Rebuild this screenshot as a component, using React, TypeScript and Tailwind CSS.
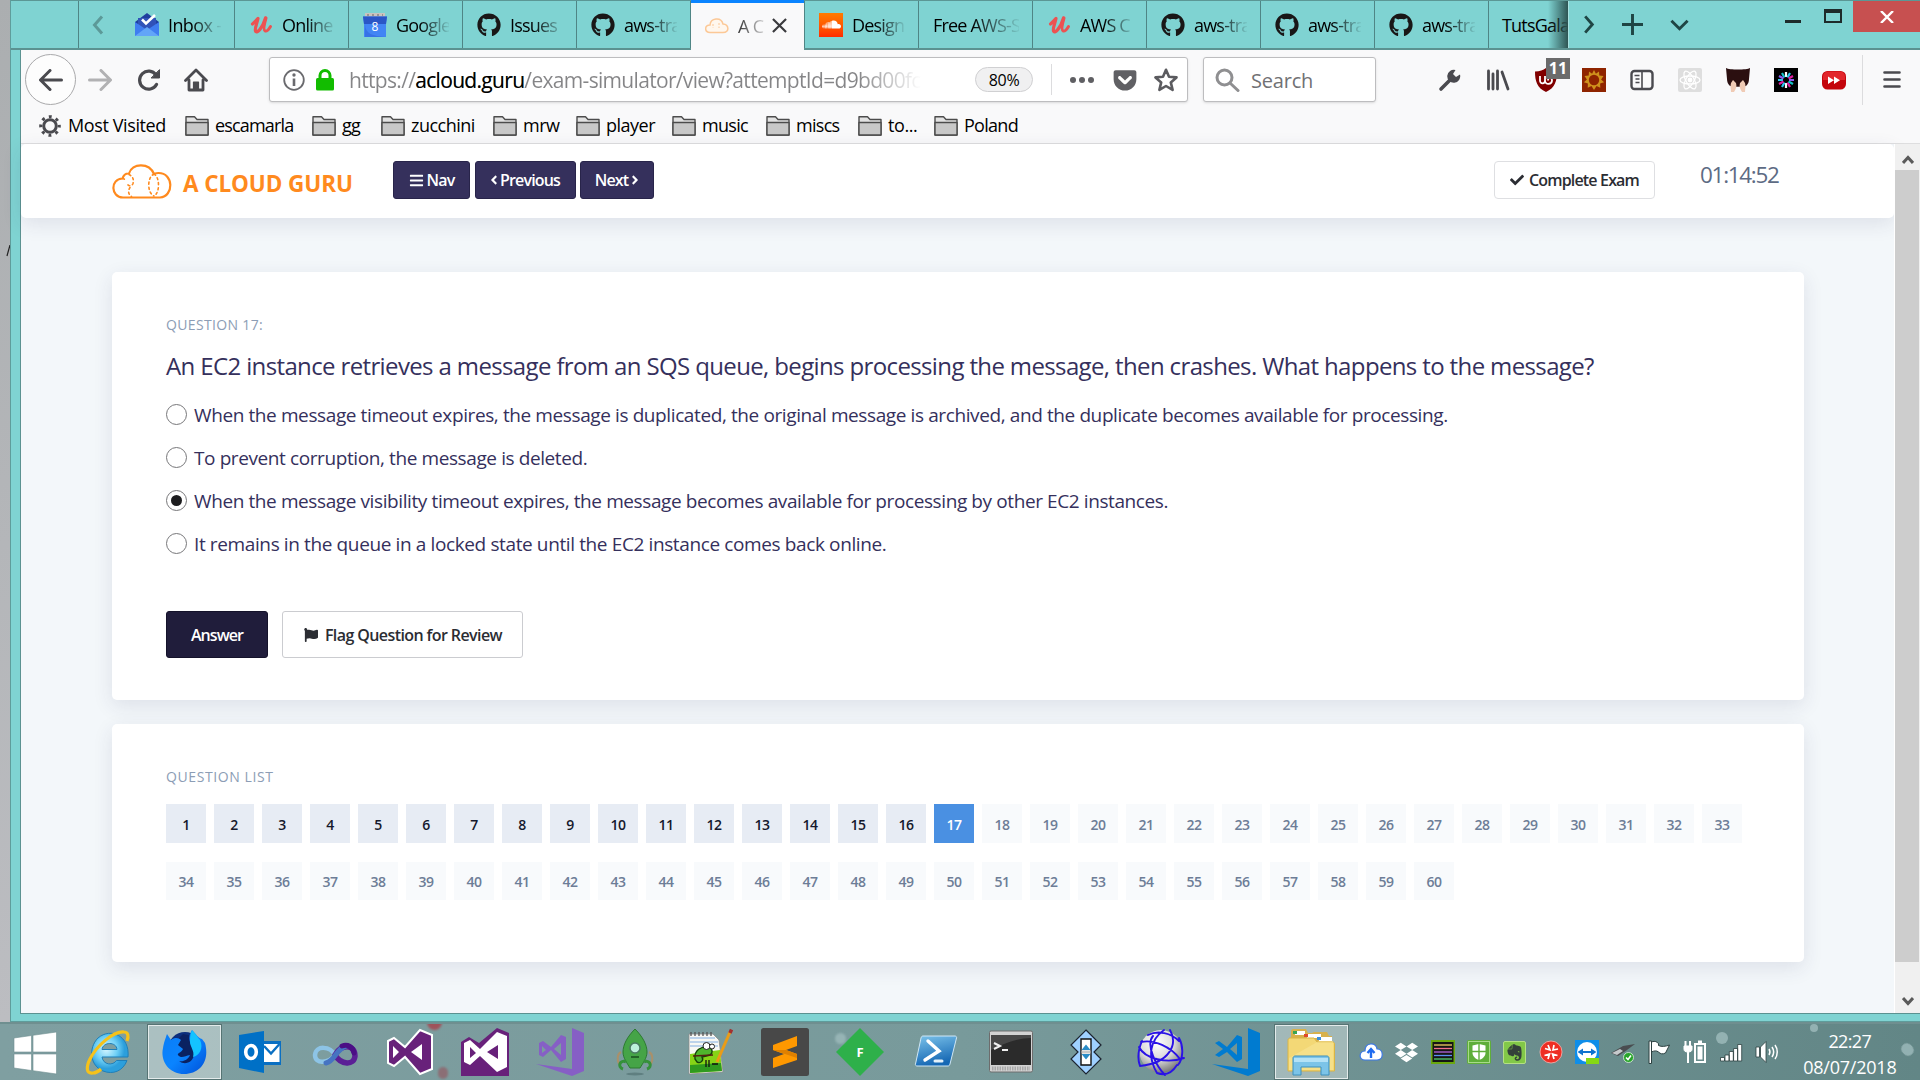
import type { ReactNode } from 'react';
import { FaGithub, FaSoundcloud, FaFlag, FaCheck, FaBars, FaAngleLeft, FaAngleRight, FaDropbox, FaEvernote, FaGetPocket } from 'react-icons/fa';

/* ---------- tab strip ---------- */

const InboxIcon = () => (
  <svg viewBox="0 0 24 24" className="h-6 w-6 shrink-0">
    <path d="M0 9 12 0l12 9v3H0z" fill="#1f3f9e" />
    <path d="M3 5h18v12H3z" fill="#3052b8" />
    <path d="M0 9l12 8 12-8v14H0z" fill="#3f7df0" />
    <path d="M0 23l12-9 12 9z" fill="#62a5f8" />
    <path d="M7 6.500l4 4 9-8.500" fill="none" stroke="#fff" strokeWidth="2.600" />
  </svg>
);

const UdemyIcon = () => (
  <svg viewBox="0 0 24 24" className="h-6 w-6 shrink-0" fill="none" stroke="#ec5252" strokeLinecap="round" strokeLinejoin="round">
    <path d="M3.500 11c2-1.500 4-4 5.500-5.500-1 5-3.500 10-2.500 12.500 1.500 3 7-3 10-13" strokeWidth="3.200" />
    <path d="M17 5c-2 7-3 12-.800 13 1.800.700 3.800-2 5.300-4.500" strokeWidth="3" />
  </svg>
);

const CalendarIcon = () => (
  <svg viewBox="0 0 24 24" className="h-6 w-6 shrink-0">
    <path d="M2 0h20v4H2z" fill="#c9c4c0" />
    <path d="M4 1h2v2H4zM9 1h2v2H9zM14 1h2v2h-2zM19 1h1v2h-1z" fill="#9a9490" />
    <path d="M0 3.500h24L23 11v13H1V11z" fill="#4285f4" />
    <path d="M0 3.500h24L23 11H1z" fill="#2a56c6" />
    <path d="M2 11c0 10 8 12 20 13H2z" fill="#2f66dd" opacity=".6" />
    <text x="12" y="18" fontSize="12" textAnchor="middle" fill="#fff" fontFamily="Open Sans, sans-serif">8</text>
  </svg>
);

const GitHubIcon = () => <FaGithub className="h-6 w-6 shrink-0 text-[#191717]" />;

const CloudTabIcon = () => (
  <svg viewBox="0 0 24 24" className="h-6 w-6 shrink-0" fill="#fff7ee" stroke="#fcc896" strokeWidth="1.500">
    <path d="M5 18.500C-1 18-.500 11 5 11c.500-7 11-8.500 13-1 6 .300 7 8.500 0 8.500z" />
    <path d="M8 10v4M14 9v5" strokeDasharray="2 1.500" strokeWidth="1" />
  </svg>
);

const SoundIcon = () => (
  <span className="flex h-6 w-6 shrink-0 items-center justify-center bg-linear-to-b from-[#ff7a00] to-[#ff2a00]">
    <FaSoundcloud className="h-[19px] w-[19px] text-white" />
  </span>
);

const TABS: { icon?: ReactNode; label: string }[] = [
  { icon: <UdemyIcon />, label: 'Online' },
  { icon: <CalendarIcon />, label: 'Google' },
  { icon: <GitHubIcon />, label: 'Issues' },
  { icon: <GitHubIcon />, label: 'aws-tra' },
];
const TABS_AFTER: { icon?: ReactNode; label: string }[] = [
  { icon: <SoundIcon />, label: 'Design' },
  { label: 'Free AWS-S' },
  { icon: <UdemyIcon />, label: 'AWS C' },
  { icon: <GitHubIcon />, label: 'aws-tra' },
  { icon: <GitHubIcon />, label: 'aws-tra' },
  { icon: <GitHubIcon />, label: 'aws-tra' },
];

const FADE = 'bg-linear-to-r from-black from-45% to-black/5 bg-clip-text text-transparent';

const Tab = ({ icon, label }: { icon?: ReactNode; label: string }) => (
  <div className="flex w-[114px] shrink-0 items-center gap-[9px] border-r border-[#4f8585] pr-[13px] pl-[14px]">
    {icon}
    <span className={`mt-0.5 min-w-0 flex-1 overflow-hidden text-[18px] tracking-[-0.8px] whitespace-nowrap ${FADE}`}>{label}</span>
  </div>
);

const TabStrip = () => (
  <div className="flex h-[50px] border-t border-b-2 border-t-[#5b9795] border-b-[#5b9291] bg-[#7fd3d2]">
    <div className="w-[68px] shrink-0 border-r border-[#4f8585]" />
    <div className="flex w-[42px] shrink-0 items-center justify-center">
      <svg viewBox="0 0 12 20" className="mr-1 h-5 w-3" fill="none" stroke="#5c9998" strokeWidth="3"><path d="M10 1.500 2.500 10l7.500 8.500" /></svg>
    </div>
    <div className="flex w-[114px] shrink-0 items-center gap-[9px] border-r border-[#4f8585] pr-[13px] pl-[14px]">
      <InboxIcon />
      <span className={`mt-0.5 min-w-0 flex-1 overflow-hidden text-[18px] tracking-[-0.6px] whitespace-nowrap ${FADE}`}>Inbox -</span>
    </div>
    {TABS.map((t, i) => <Tab key={i} {...t} />)}
    <div className="-mt-px -mb-0.5 flex w-[113px] shrink-0 items-center border-t-[3px] border-[#0a84ff] bg-[#f9f9fa] pb-0.5 pl-[14px]">
      <CloudTabIcon />
      <span className="mt-0.5 ml-[9px] w-[28px] shrink-0 overflow-hidden bg-linear-to-r from-[#333] to-black/10 bg-clip-text text-[18px] tracking-[-0.6px] whitespace-nowrap text-transparent">A C</span>
      <svg viewBox="0 0 16 16" className="ml-1.5 h-[15px] w-[15px] shrink-0" stroke="#3a3a3d" strokeWidth="2.300"><path d="M1 1l14 14M15 1 1 15" /></svg>
    </div>
    <div className="flex border-l border-[#4f8585]">
      {TABS_AFTER.map((t, i) => <Tab key={i} {...t} />)}
    </div>
    <div className="relative flex w-[79px] shrink-0 items-center overflow-hidden pt-0.5 pl-[13px] text-[18px] tracking-[-0.8px] whitespace-nowrap text-black">
      TutsGala
      <div className="absolute inset-y-0 right-0 w-5 bg-linear-to-r from-transparent to-[#2e5554]" />
    </div>
    <div className="flex flex-1 items-center gap-[27px] border-l border-[#a9e2e1] pl-[14px] text-[#1f4544]">
      <svg viewBox="0 0 12 20" className="h-[19px] w-3" fill="none" stroke="currentColor" strokeWidth="3"><path d="M2 1.500 9.500 10 2 18.500" /></svg>
      <svg viewBox="0 0 20 20" className="h-[21px] w-[21px]" fill="none" stroke="currentColor" strokeWidth="2.800"><path d="M10 0v20M0 10h20" /></svg>
      <svg viewBox="0 0 20 12" className="h-3 w-[19px]" fill="none" stroke="currentColor" strokeWidth="3"><path d="M1.500 1.500 10 10l8.500-8.500" /></svg>
    </div>
    <div className="flex shrink-0 items-start text-[#1e2b2b]">
      <div className="mt-[19px] mr-[23px] h-[3px] w-4 bg-current" />
      <div className="mt-2 mr-[11px] h-[14px] w-[18px] border-[2.500px] border-t-4 border-current" />
      <div className="flex h-[31px] w-[67px] items-center justify-center bg-[#c75050]">
        <svg viewBox="0 0 14 12" className="h-3 w-[14px]" stroke="#fff" strokeWidth="2.400"><path d="M1 0l12 12M13 0 1 12" /></svg>
      </div>
    </div>
  </div>
);

/* ---------- browser toolbar ---------- */

const Slot = ({ children }: { children: ReactNode }) => <div className="flex h-6 w-12 shrink-0 items-center justify-center">{children}</div>;

const Toolbar = () => (
  <div className="flex h-[58px] items-center pt-px text-[#4a4a4f]">
    <div className="ml-[4px] flex h-[51px] w-[51px] shrink-0 items-center justify-center rounded-full border border-[#a9a9ab] bg-[#fdfdfd]">
      <svg viewBox="0 0 24 22" className="h-[22px] w-6" fill="none" stroke="currentColor" strokeWidth="3" strokeLinecap="round" strokeLinejoin="round"><path d="M22.500 11H2M11 1.500 1.500 11l9.500 9.500" /></svg>
    </div>
    <svg viewBox="0 0 24 22" className="ml-[12px] h-[22px] w-6 shrink-0" fill="none" stroke="#b1b1b3" strokeWidth="3" strokeLinecap="round" strokeLinejoin="round"><path d="M1.500 11H22M13 1.500l9.500 9.500-9.500 9.500" /></svg>
    <svg viewBox="0 0 24 22" className="ml-[25px] h-[22px] w-6 shrink-0" fill="none" stroke="currentColor" strokeWidth="3.200" strokeLinecap="round"><path d="M19.500 15.500a9 9 0 1 1-.500-9.500" /><path d="M22.500 1v8h-8z" fill="currentColor" strokeWidth="1" /></svg>
    <svg viewBox="0 0 24 24" className="ml-[23px] h-6 w-6 shrink-0" fill="none" stroke="currentColor" strokeWidth="2.800" strokeLinejoin="round" strokeLinecap="round"><path d="M1.500 12.500 12 2l10.500 10.500M5 12v10h14V12" /><path d="M9.500 22v-8h5v8z" fill="currentColor" strokeWidth="1.200" /></svg>

    <div className="ml-[61px] flex h-[45px] w-[919px] shrink-0 items-center rounded-[3px] border border-[#bdbdbf] bg-white pl-[13px] shadow-sm">
      <svg viewBox="0 0 22 22" className="h-[22px] w-[22px]" fill="none" stroke="#6a6a6e" strokeWidth="1.800"><circle cx="11" cy="11" r="9.800" /><path d="M11 9.500V17" strokeWidth="2.600" /><circle cx="11" cy="6" r=".8" /></svg>
      <svg viewBox="0 0 20 22" className="ml-[10px] h-[22px] w-5"><path d="M5 10V6.500a5 5 0 0 1 10 0V10" fill="none" stroke="#12bc00" strokeWidth="3" /><rect x="1" y="9" width="18" height="12.500" rx="1.500" fill="#12bc00" /></svg>
      <div className="mt-0.5 ml-[14px] w-[578px] overflow-hidden bg-linear-to-r from-[#858587] from-88% to-[#85858700] to-99% bg-clip-text text-[21px] tracking-[-0.68px] whitespace-nowrap text-transparent">https://<span className="text-black">acloud.guru</span>/exam-simulator/view?attemptId=d9bd00fc</div>
      <div className="ml-[48px] flex h-[25px] w-[58px] items-center justify-center rounded-full border border-[#d0d0d2] bg-[#f0f0f1] text-[16px] tracking-[-0.3px] text-black">80%</div>
      <div className="ml-[18px] h-[31px] w-px bg-[#dcdcde]" />
      <svg viewBox="0 0 24 6" className="ml-[18px] h-1.5 w-6" fill="#5f5f63"><circle cx="3" cy="3" r="3" /><circle cx="12" cy="3" r="3" /><circle cx="21" cy="3" r="3" /></svg>
      <FaGetPocket className="ml-[18px] h-[26px] w-[26px] text-[#606064]" />
      <svg viewBox="0 0 24 24" className="ml-[16px] h-6 w-6" fill="none" stroke="#5b5b5f" strokeWidth="2.600" strokeLinejoin="round"><path d="M12 1.800 15 8.800l7.500.600-5.700 5 1.800 7.500L12 18l-6.600 3.900 1.800-7.500-5.700-5L9 8.800z" /></svg>
    </div>

    <div className="ml-[15px] flex h-[45px] w-[173px] shrink-0 items-center rounded-[3px] border border-[#bdbdbf] bg-white pl-[11px] text-[20px] tracking-[-0.2px] text-[#717174] shadow-sm">
      <svg viewBox="0 0 25 24" className="mr-[11px] h-6 w-[25px]" fill="none" stroke="#8f8f91" strokeWidth="3" strokeLinecap="round"><circle cx="9.500" cy="9.500" r="7.500" /><path d="m15 15 8 7.500" /></svg>
      <span className="mt-0.5">Search</span>
    </div>

    <div className="ml-[50px] flex">
      <Slot><svg viewBox="0 0 24 24" className="h-6 w-6"><path d="M3 21 14 10" stroke="currentColor" strokeWidth="3.600" strokeLinecap="round" /><path d="M22 6.500 18 9l-3-3 2.500-4A6.500 6.500 0 1 0 22 6.500z" fill="currentColor" /></svg></Slot>
      <Slot><svg viewBox="0 0 24 24" className="h-6 w-6" fill="none" stroke="currentColor" strokeWidth="2.800" strokeLinecap="round"><path d="M2.500 3v18M7 6v15M11.500 3v18M16 4l6 17" /></svg></Slot>
      <Slot>
        <div className="relative">
          <svg viewBox="0 0 24 24" className="h-6 w-6"><path d="M12 0c3 2.500 6 3.200 11 3.500C23 13 21 20 12 24 3 20 1 13 1 3.500 6 3.200 9 2.500 12 0z" fill="#800000" /><path d="M6 8v4.500c0 4 5 3.500 5 0V8m0 4.500c0 5 7 4 7 0S14 9 14 12.500" fill="none" stroke="#fff" strokeWidth="1.800" /></svg>
          <div className="absolute -top-[10px] left-[12px] flex h-[21px] w-6 items-center justify-center bg-[#6b6b6b] text-[16px] font-bold text-white">11</div>
        </div>
      </Slot>
      <Slot><svg viewBox="0 0 24 24" className="h-6 w-6"><path d="M0 0h24v24H0z" fill="#8f2400" /><path d="m12 2 1.900 3.800L17 3.500l.300 4 4.200.500-2.400 3.500 3 2.800-4 1.200.200 4.200-3.800-1.600L12 22l-2.500-3.900-3.800 1.600.200-4.200-4-1.200 3-2.800L2.500 8l4.200-.500.300-4 3.100 2.300z" fill="#cf911c" /><circle cx="12" cy="12" r="5.200" fill="#8f2400" /></svg></Slot>
      <Slot><svg viewBox="0 0 24 24" className="h-6 w-6" fill="none" stroke="currentColor" strokeWidth="2.400"><rect x="1.500" y="3" width="21" height="18" rx="3" /><path d="M12 3v18" strokeWidth="1.600" /><path d="M4.500 7.500h5M5.500 11h4M5.500 14.500h4" strokeWidth="1.600" /></svg></Slot>
      <Slot>
        <svg viewBox="0 0 24 24" className="h-6 w-6" fill="none" stroke="#fff" strokeWidth="1.300">
          <rect width="24" height="24" rx="2" fill="#dedede" stroke="none" />
          <ellipse cx="12" cy="12" rx="10" ry="4" /><ellipse cx="12" cy="12" rx="10" ry="4" transform="rotate(60 12 12)" /><ellipse cx="12" cy="12" rx="10" ry="4" transform="rotate(120 12 12)" /><circle cx="12" cy="12" r="1.800" fill="#fff" />
        </svg>
      </Slot>
      <Slot><svg viewBox="0 0 24 24" className="h-6 w-6"><path d="M0 0c3 2 21 2 24 0l-1 11c0 3-1 5-3 7-5 1-11 1-16 0-2-2-3-4-3-7z" fill="#2b0f10" /><path d="M5 24c0-3-1-6 0-9l2-3 3 3c1 3 0 6-2 9zM19 24c0-3 1-6 0-9l-2-3-3 3c-1 3 0 6 2 9z" fill="#f0cbb5" /></svg></Slot>
      <Slot><svg viewBox="0 0 24 24" className="h-6 w-6" strokeWidth="2.200"><path d="M0 0h24v24H0z" fill="#000" /><path d="M12 4v5M12 15v5" stroke="#fff" /><path d="m16 5-2.500 4.500M8 19l2.500-4.500M4 12h5" stroke="#2cc8f0" /><path d="m19 8-4.500 2.500M5 16l4.500-2.500M16 19l-2.500-4.500" stroke="#e01ea0" /><path d="m8 5 2.500 4.500M19 16l-4.500-2.500" stroke="#15c3c8" /><path d="M20 12h-5M5 8l4.500 2.500" stroke="#8a5cf0" /></svg></Slot>
      <Slot><svg viewBox="0 0 24 24" className="h-6 w-6"><rect x="0" y="3" width="24" height="18.500" rx="5.500" fill="#c4050c" /><path d="M1 12V8.500A5 5 0 0 1 6 3.500h12a5 5 0 0 1 5 5V12z" fill="#e2262b" /><path d="M6 8.500l6 3.700L6 16zM12 8.500l6 3.700-6 3.800z" fill="#fff" /></svg></Slot>
    </div>
    <div className="ml-[4px] h-[50px] w-px bg-[#dcdcde]" />
    <svg viewBox="0 0 18 18" className="ml-5 h-[19px] w-[18px] shrink-0" stroke="currentColor" strokeWidth="2.600" strokeLinecap="round"><path d="M1.500 2h15M1.500 9h15M1.500 16h15" /></svg>
  </div>
);

const Folder = () => (
  <svg viewBox="0 0 24 21" className="mr-[6px] h-[21px] w-6 shrink-0" stroke="#4c4c4c" strokeWidth="1.400" strokeLinejoin="round"><path d="M1 20V1.800h8.500L12 4.500h11V20z" fill="#e2e2e2" /><path d="M1 7.500h22V20H1z" fill="#c8c8c8" /></svg>
);

const BOOKMARKS = [
  { label: 'escamarla', cls: 'w-[127px] tracking-[-0.83px]' },
  { label: 'gg', cls: 'w-[69px] tracking-[-0.8px]' },
  { label: 'zucchini', cls: 'w-[112px] tracking-[-0.52px]' },
  { label: 'mrw', cls: 'w-[83px] tracking-[-0.5px]' },
  { label: 'player', cls: 'w-[96px] tracking-[-0.51px]' },
  { label: 'music', cls: 'w-[94px] tracking-[-0.7px]' },
  { label: 'miscs', cls: 'w-[92px] tracking-[-0.7px]' },
  { label: 'to...', cls: 'w-[76px] tracking-[-0.4px]' },
  { label: 'Poland', cls: 'w-[110px] tracking-[-0.71px]' },
];

const Bookmarks = () => (
  <div className="flex h-[36px] items-center border-b border-[#dededf] pl-[18px] text-[18px] text-black">
    <div className="flex w-[146px] shrink-0 items-center">
      <svg viewBox="0 0 22 22" className="mr-[7px] h-[22px] w-[22px]" fill="none" stroke="#4a4a4f"><circle cx="11" cy="11" r="6.300" strokeWidth="3" /><circle cx="11" cy="11" r="9.300" strokeWidth="3" strokeDasharray="2.900 4.400" strokeDashoffset="1.450" /></svg>
      <span className="tracking-[-0.39px] whitespace-nowrap">Most Visited</span>
    </div>
    {BOOKMARKS.map((b) => (
      <div key={b.label} className={`flex shrink-0 items-center whitespace-nowrap ${b.cls}`}><Folder />{b.label}</div>
    ))}
  </div>
);

/* ---------- exam page ---------- */

const OPTIONS = [
  { text: 'When the message timeout expires, the message is duplicated, the original message is archived, and the duplicate becomes available for processing.', cls: 'tracking-[-0.395px]' },
  { text: 'To prevent corruption, the message is deleted.', cls: 'tracking-[-0.4px]' },
  { text: 'When the message visibility timeout expires, the message becomes available for processing by other EC2 instances.', cls: 'tracking-[-0.4px]' },
  { text: 'It remains in the queue in a locked state until the EC2 instance comes back online.', cls: 'tracking-[-0.38px]' },
];
const CHOSEN = 2;
const CURRENT = 17;

const NavButton = ({ children, cls }: { children: ReactNode; cls: string }) => (
  <button className={`flex h-[38px] shrink-0 items-center justify-center gap-[3px] rounded-[3px] border border-[#28244a] bg-[#35305c] text-[16px] font-semibold tracking-[-0.86px] text-white ${cls}`}>{children}</button>
);

const cellTone = (n: number) => {
  if (n === CURRENT) return 'bg-[#4a90e2] text-white';
  return n < CURRENT ? 'bg-[#e7ecf4] text-[#15192c]' : 'bg-[#f8fafc] text-[#6d7d97]';
};

const Cell = ({ n, cls }: { n: number; cls: string }) => (
  <div className={`flex w-10 items-center justify-center text-[14px] font-semibold tracking-[-0.5px] ${cls} ${cellTone(n)}`}>{n}</div>
);

const ExamHeader = () => (
  <header className="flex h-[74px] shrink-0 items-start rounded-[5px] bg-white pl-[91px] shadow-[0_6px_20px_rgba(50,50,93,0.11)]">
    <svg viewBox="0 0 60 35" className="mt-[20px] h-[35px] w-[60px] shrink-0" fill="none" stroke="#ff8a1e" strokeWidth="2.200" strokeLinecap="round">
      <path d="M11 33.500h37c14-1 14-24.500-1.500-24.500-2.500 0-3.500.600-4.500 1C37-2 20-1 17 9.500c-3-.200-5.500 1.500-6.500 5C-2 15-1.500 33 11 33.500z" />
      <path d="M17 10.500c4 2 5 5 4 9-1 3-5 3-6 0M18 23.500c-2 3-2 7 1.500 9M10.500 14.500c1 0 2 .500 2.500 1.500M42 10c6 3 6 19 0 22M42 10c-7 3-7 19 0 22" strokeWidth="1.600" strokeDasharray="2 3" />
    </svg>
    <div className="mt-[24px] ml-[11px] w-[180px] shrink-0 text-[22.500px] leading-[32px] font-bold tracking-[-0.1px] whitespace-nowrap text-[#ff8a1e]">A CLOUD GURU</div>
    <div className="mt-[17px] ml-[30px] flex shrink-0 gap-[4.500px]">
      <NavButton cls="w-[77px]"><FaBars className="h-[15px] w-[15px]" />Nav</NavButton>
      <NavButton cls="w-[101px]"><FaAngleLeft className="-mr-px h-[14px] w-[8px]" />Previous</NavButton>
      <NavButton cls="w-[74px]">Next<FaAngleRight className="h-[14px] w-[8px]" /></NavButton>
    </div>
    <div className="flex-1" />
    <button className="mt-[17px] flex h-[38px] w-[161px] shrink-0 items-center justify-center gap-[5px] rounded-[4px] border border-[#dedfe2] bg-white text-[16px] font-semibold tracking-[-0.83px] whitespace-nowrap text-[#2b2d33]">
      <FaCheck className="h-[14px] w-[14px]" />Complete Exam
    </button>
    <div className="mt-[16px] mr-[108px] ml-[45px] w-[86px] shrink-0 text-[22.500px] leading-[30px] tracking-[-1.3px] text-[#5d6b84]">01:14:52</div>
  </header>
);

const CARD = 'mr-[90px] ml-[91px] shrink-0 rounded-[5px] bg-white px-[54px] shadow-[0_6px_20px_rgba(50,50,93,0.11)]';

const ExamPage = () => (
  <main className="flex min-w-0 flex-1 flex-col bg-[#f3f7fa]">
    <ExamHeader />
    <section className={`mt-[54px] h-[428px] ${CARD}`}>
      <h2 className="pt-[43px] text-[14px] leading-5 tracking-[0.34px] text-[#8c9db5]">QUESTION 17:</h2>
      <p className="mt-[13px] text-[24px] leading-[36px] tracking-[-0.63px] whitespace-nowrap text-[#35305c]">An EC2 instance retrieves a message from an SQS queue, begins processing the message, then crashes. What happens to the message?</p>
      <div className="mt-[9px] flex flex-col">
        {OPTIONS.map((o, i) => (
          <label key={o.text} className="flex h-[43px] items-center">
            <span className="mr-[7px] flex h-[21px] w-[21px] shrink-0 items-center justify-center rounded-full border border-[#77777a] bg-white">
              {i === CHOSEN && <span className="h-[11px] w-[11px] rounded-full bg-[#1d1d1f]" />}
            </span>
            <span className={`pt-px text-[19px] whitespace-nowrap text-[#35305c] ${o.cls}`}>{o.text}</span>
          </label>
        ))}
      </div>
      <div className="mt-[46px] flex gap-[14px]">
        <button className="h-[47px] w-[102px] rounded-[3px] border border-[#14122a] bg-[#201d3b] pt-px text-[16px] font-semibold tracking-[-0.95px] text-white">Answer</button>
        <button className="flex h-[47px] w-[241px] items-center justify-center gap-[6px] rounded-[3px] border border-[#cbccd0] bg-white pt-px text-[16px] font-semibold tracking-[-0.59px] text-[#2b2d33]">
          <FaFlag className="h-[14px] w-[16px]" />Flag Question for Review
        </button>
      </div>
    </section>
    <section className={`mt-[24px] h-[238px] ${CARD}`}>
      <h2 className="pt-[43px] text-[14px] leading-5 tracking-[0.59px] text-[#8c9db5]">QUESTION LIST</h2>
      <div className="mt-[17px] flex gap-2">
        {Array.from({ length: 33 }, (_, i) => <Cell key={i} n={i + 1} cls="h-[39px] pt-[2px]" />)}
      </div>
      <div className="mt-[19px] flex gap-2">
        {Array.from({ length: 27 }, (_, i) => <Cell key={i} n={i + 34} cls="h-[38px] pt-[1px]" />)}
      </div>
    </section>
  </main>
);

const Scrollbar = () => (
  <div className="flex w-[26px] shrink-0 flex-col border-l border-white bg-[#f0f0f0]">
    <div className="flex h-[26px] items-center justify-center"><svg viewBox="0 0 12 9" className="mt-1 h-[9px] w-3" fill="none" stroke="#5a5a5a" strokeWidth="3"><path d="m1 8 5-5.500L11 8" /></svg></div>
    <div className="mr-px h-[792px] bg-[#cdcdcd]" />
    <div className="flex flex-1 items-center justify-center"><svg viewBox="0 0 12 9" className="mt-[28px] h-[9px] w-3" fill="none" stroke="#5a5a5a" strokeWidth="3"><path d="m1 1 5 5.500L11 1" /></svg></div>
  </div>
);

/* ---------- taskbar ---------- */

const VsMark = ({ fill, stroke }: { fill: string; stroke: string }) => (
  <svg viewBox="0 0 48 48" className="h-12 w-12">
    <path d="M2 13l6-3 11 9L34 2l12 5v34l-12 5-15-17-11 9-6-3z" fill={fill} stroke={stroke} strokeWidth="2" />
    <path d="M7 18v12l6-6zM36 16v16l-11-8z" fill={stroke} />
  </svg>
);

const TASKS: { name: string; active?: boolean; art: ReactNode }[] = [
  {
    name: 'Internet Explorer',
    art: (
      <svg viewBox="0 0 48 48" className="mr-1 h-12 w-12">
        <defs><radialGradient id="ie" cx=".4" cy=".4"><stop offset="0" stopColor="#d6f6ff" /><stop offset=".6" stopColor="#6fd0f6" /><stop offset="1" stopColor="#2c9fdc" /></radialGradient></defs>
        <path d="M44 29H18c1 8 11 9 14.500 3.500H43C39 43 29 47 19 43 6 38 4 20 14 10c13-11 32-2 30 19zM18 21.500h15c-.500-8-14-8-15 0z" fill="url(#ie)" stroke="#1f7fb8" />
        <path d="M43 13c2-5 1-9-3-9C30 3 13 17 6 31c-4 8-4 15 3 14 3 0 6-2 8-4" fill="none" stroke="#f6c21a" strokeWidth="3.200" />
      </svg>
    ),
  },
  {
    name: 'Firefox',
    active: true,
    art: (
      <svg viewBox="0 0 48 48" className="h-12 w-12">
        <defs><linearGradient id="fx" x2="1" y2="1"><stop offset="0" stopColor="#0a7cf5" /><stop offset=".5" stopColor="#0a84ff" /><stop offset="1" stopColor="#0050d8" /></linearGradient></defs>
        <circle cx="24" cy="21" r="17" fill="#0b2f7d" />
        <path d="M16 12l6-6 10 2 6 10-4 16-14 2-6-10z" fill="#0a2262" />
        <path d="M6 6l4 6c4-3 8-2 10 0l-3 5 5 4c-2 4-6 4-5 6 3 4 7 1 12 0-2 5-7 7-11 6 6 5 14 1 15-6 1-5-3-9-4-13C27 8 30 4 31 2c4 4 6 8 10 9l3 4c5 18-5 31-21 31C8 46-1 33 2 20 3 14 4 12 6 6z" fill="url(#fx)" />
        <path d="M31 2c4 4 6 8 8 10 4 8-1 16-7 17 2-6-3-10-3-15 0-6 1-9 2-12z" fill="#14c3ff" />
      </svg>
    ),
  },
  {
    name: 'Outlook',
    art: (
      <svg viewBox="0 0 44 44" className="h-11 w-11">
        <path d="M25 11h18v24H25z" fill="#0a6fc2" /><path d="M26 14h15.500v18H26z" fill="#fff" />
        <path d="M26 16l7 7.500L41.500 14" fill="none" stroke="#0a6fc2" strokeWidth="2.400" />
        <path d="M1 5l25-4v42L1 38z" fill="#0070c6" /><ellipse cx="13" cy="22" rx="5.300" ry="6.500" fill="none" stroke="#fff" strokeWidth="3.600" />
      </svg>
    ),
  },
  {
    name: 'Studio Infinity',
    art: (
      <svg viewBox="0 0 48 26" className="mt-[5px] h-[26px] w-12" fill="none" strokeLinecap="round">
        <path d="M24 13C19 4 5 3 4 13c0 10 14 8 20 0" stroke="#8dc4e6" strokeWidth="4.500" />
        <path d="M24 13c6 10 19 11 20 1C44 2 30 2 24 13" stroke="#5b1f96" strokeWidth="5.500" />
        <path d="M15 21c9-2 10-14 20-17" stroke="#4674c2" strokeWidth="5" /><path d="M31 4c6-2 11 1 12 7" stroke="#4b0e85" strokeWidth="5" />
      </svg>
    ),
  },
  { name: 'Visual Studio 2013', art: <VsMark fill="#68217a" stroke="#fff" /> },
  {
    name: 'Visual Studio 2015',
    art: (
      <svg viewBox="0 0 48 48" className="h-12 w-12">
        <path d="M0 14l8-5 10 6L36 0l12 5v43H0z" fill="#68217a" />
        <path d="M3 15l6-3 10 9L36 4l10 4v31l-10 5-17-16-10 9-6-3zM9 19v11l6-5zM37 17v14l-11-7z" fill="#fff" fillRule="evenodd" />
      </svg>
    ),
  },
  {
    name: 'Visual Studio 2017',
    art: (
      <svg viewBox="0 0 48 48" className="h-12 w-12" fill="#865fc5">
        <path d="M36 0l12 5v38l-12 5L0 36l36 5z" /><path d="M3 15l4-2 8 6 10-12 5 2v22l-5 3-10-12-8 7-4-2zM6 18v7l4-3zM25 15v12l-7-6z" fillRule="evenodd" />
      </svg>
    ),
  },
  {
    name: 'Rocket',
    art: (
      <svg viewBox="0 0 48 48" className="h-12 w-12">
        <ellipse cx="24" cy="46" rx="9" ry="1.500" fill="#5f7f80" />
        <path d="M10 24c-4 2-4 8-2 12M38 24c4 2 4 8 2 12" fill="none" stroke="#a9906a" strokeWidth="2" />
        <path d="M24 1c8 8 12 16 12 23 0 6-4 11-7 16H19c-3-5-7-10-7-16C12 17 16 9 24 1z" fill="#45a447" stroke="#2c7a30" />
        <path d="M15 34c-6-3-9 5-3 7M33 34c6-3 9 5 3 7" fill="none" stroke="#35913a" strokeWidth="3" />
        <circle cx="24" cy="20" r="5" fill="#bdf0dc" stroke="#4a7a62" strokeWidth="1.500" /><path d="M20 29h8" stroke="#236428" strokeWidth="2" />
      </svg>
    ),
  },
  {
    name: 'Notepad++',
    art: (
      <svg viewBox="0 0 48 48" className="h-12 w-12">
        <path d="M3 6h24l6 6 4 32-34 2z" fill="#f8f8f4" stroke="#8a8a8a" strokeWidth=".8" /><path d="M4 26l30-4 2 21-32 2z" fill="#86d416" /><path d="M4 37l31-2 1 8-32 2z" fill="#2f9a1f" />
        <path d="M4 10h25M4 14h28M4 18h28" stroke="#a9c6e8" strokeWidth="1.400" /><path d="M5 4v4M9 4v4M13 4v4M17 4v4M21 4v4M25 4v4" stroke="#555" strokeWidth="1.300" />
        <path d="M9 31c-1-9 6-13 14-12 4 2 4 6 1 8l-8 2c2 3-1 7-5 5z" fill="#4fb62c" stroke="#14420a" strokeWidth="1.400" />
        <circle cx="20.500" cy="18" r="3.500" fill="#fff" stroke="#222" /><circle cx="26" cy="18.500" r="2.500" fill="#fff" stroke="#222" />
        <path d="M20 32v7M23 32v7M26 36h6" stroke="#111" strokeWidth="1.300" /><path d="M7 28l20-1" stroke="#552211" strokeWidth="1.500" />
        <path d="M31 34L44 4" stroke="#e99c17" strokeWidth="3" /><path d="M44 5l1.500-3.500" stroke="#a33030" strokeWidth="3.500" />
      </svg>
    ),
  },
  {
    name: 'Sublime Text',
    art: (
      <svg viewBox="0 0 48 48" className="h-12 w-12">
        <rect width="48" height="48" rx="2.500" fill="#484848" /><path d="M12 17l24-9v10l-11 4 11 4v6L12 40V30l11-4-11-4z" fill="#ff9800" /><path d="M12 22l24 8v-4l-11-4z" fill="#e08000" />
      </svg>
    ),
  },
  {
    name: 'Fiddler',
    art: (
      <svg viewBox="0 0 48 48" className="h-12 w-12">
        <path d="M24 0l24 24-24 24L0 24z" fill="#2eb04a" /><text x="24" y="29" fontSize="13" fontWeight="700" textAnchor="middle" fill="#fff" fontFamily="Open Sans, sans-serif">F</text>
      </svg>
    ),
  },
  {
    name: 'PowerShell',
    art: (
      <svg viewBox="0 0 48 48" className="h-12 w-12">
        <defs><linearGradient id="ps" x2=".3" y2="1"><stop offset="0" stopColor="#7cc3ea" /><stop offset="1" stopColor="#1668b4" /></linearGradient></defs>
        <path d="M11 8h32c1 0 2 1 1.500 2L38 36c-.500 1.500-1 2-2 2H5c-1 0-2-1-1.500-2L9 10c.500-1.500 1-2 2-2z" fill="url(#ps)" stroke="#cfe7f5" strokeWidth="1" />
        <path d="M16 13l11 10-14 9" fill="none" stroke="#fff" strokeWidth="3.400" strokeLinecap="round" /><path d="M23 33h7" stroke="#e4f1fa" strokeWidth="3" strokeLinecap="round" />
      </svg>
    ),
  },
  {
    name: 'Terminal',
    art: (
      <svg viewBox="0 0 48 48" className="h-12 w-12">
        <rect x="2.500" y="3" width="43" height="41" rx="1.500" fill="#d2d2d2" stroke="#6c6c6c" /><path d="M4 7h40v30H4z" fill="#2b2b2b" /><path d="M4 22C16 16 30 10 44 10V7H4z" fill="#474747" />
        <path d="M7 15l6 3-6 3M15 22h6" fill="none" stroke="#f0f0f0" strokeWidth="2" /><path d="M5 40.500h38" stroke="#a9a9a9" strokeWidth="4" strokeDasharray="1.500 1" />
      </svg>
    ),
  },
  {
    name: 'Sorter',
    art: (
      <svg viewBox="0 0 32 46" className="h-[46px] w-8">
        <path d="M16 1l15 15-7 7 7 7-15 15L1 30l7-7-7-7z" fill="#9fd0ff" stroke="#1c2430" strokeWidth="1.200" />
        <path d="M11 10h10v26H11z" fill="#fff" stroke="#111" strokeWidth="1.400" /><path d="M11.500 21.500h9v3h-9z" fill="#c9c9c9" /><path d="M16 15.500l4.500 5.500h-9zM16 30.500l4.500-5.500h-9z" fill="#2a8cc8" />
      </svg>
    ),
  },
  {
    name: 'Sphere',
    art: (
      <svg viewBox="0 0 48 48" className="h-12 w-12">
        <defs><radialGradient id="sp" cx=".4" cy=".3" r=".75"><stop offset="0" stopColor="#fff" /><stop offset=".55" stopColor="#d8d8d8" /><stop offset="1" stopColor="#6c6c6c" /></radialGradient></defs>
        <circle cx="24" cy="23.500" r="21.500" fill="url(#sp)" />
        <g fill="none" stroke="#2a12e6" strokeWidth="1.900" strokeLinecap="round">
          <path d="M2 19C8 31 30 36 47 30M11 7c10-5 23-2 31 6M4 14c13-3 30 5 39 17M27 2C13 12 10 28 20 45M20 45c8 3 15 0 20-8M33 2c8 14 0 33-30 36M3 38C0 30 2 20 5 13M16 8C8 17 20 39 28 47M42 10c5 9 4 21-1 27" />
        </g>
      </svg>
    ),
  },
  {
    name: 'VS Code',
    art: (
      <svg viewBox="0 0 48 48" className="h-12 w-12" fill="#007bd0">
        <path d="M36 0l12 5v38l-12 5L0 36l36 5z" /><path d="M3 15l4-2 8 6 10-12 5 2v22l-5 3-10-10-8 5-4-2 8-6zM25 15v12l-7-6z" fillRule="evenodd" />
      </svg>
    ),
  },
  {
    name: 'File Explorer',
    active: true,
    art: (
      <svg viewBox="0 0 48 48" className="h-12 w-12">
        <path d="M4 3c0-1 1-2 2-2h13l2 4h4l2-1h13l2 4h3v8H4z" fill="#d8b14c" /><path d="M8 3h10v4H8zM20 6h14v4H20zM32 9h13v4H32z" fill="#fff" /><path d="M6 3h4v3H6z" fill="#38a555" /><path d="M17 6h4v3h-4z" fill="#e0482c" /><path d="M30 9h4v3h-4z" fill="#3b8ed8" />
        <path d="M1 12c0-1 1-2 2-2h24l3 4h16c1 0 1.500 1 1.500 2v27H1z" fill="#f3d876" stroke="#d9b445" /><path d="M2 30l30-17h14v29H2z" fill="#f9e79c" opacity=".5" />
        <path d="M6 30c0-1 1-2 2-2h32c1 0 2 1 2 2v17h-8v-8H14v8H6z" fill="#7cc4e8" stroke="#3c90bd" /><path d="M7 30h34v4H7z" fill="#b4e2f6" />
      </svg>
    ),
  },
];

const Tray = () => (
  <div className="flex shrink-0 items-center">
    {([
      <svg key="up" viewBox="0 0 24 20" className="h-5 w-6"><path d="M6 18C-1 18 0 9 6 9 6 0 17 0 18 7c7 0 7 11 0 11z" fill="#fff" stroke="#3b78e7" strokeWidth="1.200" /><path d="M12 16V9M8.500 11 12 7l3.500 4" stroke="#1f6bf0" strokeWidth="2.400" fill="none" /></svg>,
      <FaDropbox key="db" className="h-[23px] w-[23px] text-white" />,
      <svg key="eq" viewBox="0 0 24 24" className="h-6 w-6"><path d="M0 0h24v24H0z" fill="#6aa80e" /><path d="M1.500 2h21v20h-21z" fill="#151515" /><g strokeWidth="1.300"><path d="M3 5h18" stroke="#f0d060" /><path d="M3 8.500h18" stroke="#f0708a" /><path d="M3 12h18" stroke="#b565e0" /><path d="M3 15.500h18" stroke="#5a90f0" /><path d="M3 19h18" stroke="#50d070" /></g></svg>,
      <svg key="sh" viewBox="0 0 24 24" className="h-6 w-6"><rect width="24" height="24" rx="2" fill="#5fae3a" /><rect x="1.500" y="1.500" width="21" height="21" fill="none" stroke="#a8da8a" /><path d="M5.500 5.500 12 4l6.500 1.500V13c0 3-3 6-6.500 7-3.500-1-6.500-4-6.500-7z" fill="#fff" /><path d="M12 4v16M5 11.500h14" stroke="#5fae3a" strokeWidth="1.400" /></svg>,
      <span key="en" className="flex h-[23px] w-[23px] items-center justify-center rounded-[2px] border border-[#b5e084] bg-[#82c848]"><FaEvernote className="h-[19px] w-[19px] text-[#34403a]" /></span>,
      <svg key="rd" viewBox="0 0 24 24" className="h-6 w-6"><circle cx="12" cy="12" r="11" fill="#ee2e24" stroke="#f6b8b2" strokeWidth=".8" /><path d="M9 5l2 5-5-1.500M15 5l-1 5 5-1M9 19l1.500-5-5 1.500M15 19l-1.500-5 5 1.500" fill="none" stroke="#fff" strokeWidth="1.700" /></svg>,
      <svg key="tv" viewBox="0 0 24 24" className="h-6 w-6"><path d="M0 0h24v24H0z" fill="#0e8ee9" /><circle cx="12" cy="12" r="10" fill="#fff" /><path d="M2.500 12 8 8.500v2.500h8V8.500l5.500 3.500-5.500 3.500V13H8v2.500z" fill="#0e72d0" /><path d="M11 18h13v6H11z" fill="#86d814" /></svg>,
      <svg key="us" viewBox="0 0 24 24" className="h-6 w-6"><path d="M0 13 12 6l12-2-8 6-9 6z" fill="#4a4d50" /><path d="M1 13l8-4 3 2-6 4z" fill="#c6cacc" /><circle cx="17.500" cy="17.500" r="5" fill="#27a52a" stroke="#dff3df" strokeWidth=".8" /><path d="m15 17.500 2 2 3-4" fill="none" stroke="#fff" strokeWidth="1.600" /></svg>,
      <svg key="fl" viewBox="0 0 24 24" className="h-6 w-6" fill="#fff" stroke="#2c4040" strokeWidth="1"><path d="M2 1h2.500v22.500H2z" /><path d="M4.500 2c4-1.500 5 0 7 1.500v2c3 1.500 7 1 11-.500l-4 8c-3 1.500-5 1-7-1-2-1.500-4-1.500-7 0z" /></svg>,
      <svg key="bt" viewBox="0 0 24 24" className="h-6 w-6" fill="none" stroke="#fff" strokeWidth="2"><path d="M2.500 1v5M7 1v5M5 11v12" /><path d="M1 6h8v3c0 2-1 3-4 3s-4-1-4-3z" fill="#fff" strokeWidth="1" /><rect x="12" y="4" width="10" height="18" /><path d="M15 2h4" strokeWidth="3" /><path d="M14.500 6.500h5v13h-5z" fill="#fff" stroke="none" /></svg>,
      <svg key="sg" viewBox="0 0 24 24" className="h-6 w-6" fill="#fff" stroke="#2c4040" strokeWidth=".8"><path d="M1.500 17.500h4V21h-4zM6 15h4v6H6zM10.300 11.500h4V21h-4zM14.600 8.500h4V21h-4zM18.700 4.500h4V21h-4z" /></svg>,
      <svg key="vo" viewBox="0 0 24 24" className="h-6 w-6" fill="none" stroke="#fff" strokeWidth="1.500"><path d="M1 7h3.500v10H1zM5.500 7 11 1.500v21L5.500 17z" fill="#fff" stroke="#2c4040" strokeWidth=".8" /><path d="M14 9c1.300 2 1.300 4 0 6M17 7c2 3 2 7 0 10M20 5c3 4 3 10 0 14" /></svg>,
    ]).map((icon, i) => (
      <div key={i} className="flex h-6 w-9 items-center justify-center">{icon}</div>
    ))}
  </div>
);

const Taskbar = () => (
  <div className="relative flex h-[58px] shrink-0 overflow-hidden border-t-2 border-[#6f8f90] bg-linear-to-r from-[#7f9fa1] via-[#789a9b] to-[#628686] text-white">
    <div className="absolute -top-3 left-[427px] h-[18px] w-[15px] rounded-full bg-[#a8404a] opacity-80 blur-[1px]" />
    <div className="absolute top-[43px] left-[438px] h-3 w-2.5 rounded-full bg-[#96505a] opacity-60 blur-[1px]" />
    <div className="absolute top-[9px] left-[835px] h-[11px] w-[11px] rounded-full bg-[#a3bfc0] opacity-70 blur-[1px]" />
    <div className="absolute top-[8px] left-[1716px] h-3 w-3 rounded-full bg-[#9fbcbd] opacity-80 blur-[0.500px]" />
    <div className="absolute top-0 left-[1810px] h-2 w-2 rounded-full bg-[#9fbcbd] opacity-80 blur-[0.500px]" />
    <div className="absolute top-[20px] left-[1901px] h-[11px] w-[13px] rotate-45 rounded-full bg-[#9fbcbd] opacity-80 blur-[0.500px]" />
    <div className="flex w-[72px] shrink-0 items-center justify-center">
      <svg viewBox="0 0 44 44" className="mt-px mr-[3px] h-11 w-11" fill="#fff" stroke="#6e8f90" strokeWidth=".6"><path d="M1 7l17.500-2.500V21H1zM20 4.300 43.500 1v20H20zM1 23h17.500v16.500L1 37zM20 23h23.500v20L20 39.700z" /></svg>
    </div>
    {TASKS.map((t) => (
      <div key={t.name} title={t.name} className={`mx-px my-px flex w-[73.100px] shrink-0 items-center justify-center ${t.active ? 'border border-[#e3ebeb] bg-white/35 outline outline-[#567474]' : ''}`}>{t.art}</div>
    ))}
    <div className="w-[4px] shrink-0" />
    <Tray />
    <div className="flex flex-1 flex-col items-center pt-[4px] pr-[5px] text-[18px] leading-[26px]">
      <span className="tracking-[-0.64px]">22:27</span>
      <span className="tracking-[-0.22px]">08/07/2018</span>
    </div>
  </div>
);

export default function App() {
  return (
    <div className="flex h-[1080px] w-[1920px] flex-col overflow-hidden bg-[#b4b7ba] font-['Open_Sans','Noto_Sans',sans-serif]">
      <div className="flex h-[1022px] shrink-0">
        <div className="flex w-[10px] shrink-0 items-start justify-end overflow-hidden bg-linear-to-b from-[#abaeb0] to-[#bcbdc1]">
          <svg viewBox="0 0 4 12" className="mt-[245px] h-3 w-1" stroke="#222" strokeWidth="1.200"><path d="M4 0 1 11" /></svg>
        </div>
        <div className="flex min-w-0 flex-1 flex-col border-b border-l border-[#5f9c9b] bg-[#7fd3d2] pb-[7px]">
          <TabStrip />
          <div className="ml-[9px] flex flex-1 flex-col border-b border-l border-[#5b9291] bg-[#f9f9fa]">
            <Toolbar />
            <Bookmarks />
            <div className="flex flex-1">
              <ExamPage />
              <Scrollbar />
            </div>
          </div>
        </div>
      </div>
      <Taskbar />
    </div>
  );
}
